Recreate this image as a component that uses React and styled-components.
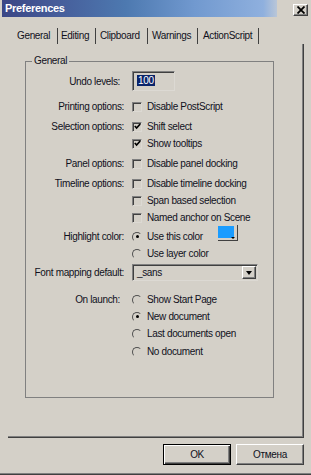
import React from 'react';
import styled, { createGlobalStyle } from 'styled-components';

const GlobalStyle = createGlobalStyle`
  html, body {
    margin: 0;
    padding: 0;
    background: #d4d0c8;
  }
  body {
    font-family: 'Liberation Sans', Arial, sans-serif;
    color: #10101c;
  }
`;

const Window = styled.div`
  width: 311px;
  height: 475px;
  box-sizing: border-box;
  background: #d4d0c8;
  display: flex;
  flex-direction: column;
  box-shadow: inset 0 -1px #404040, inset 0 -2px #808080;
  font-size: 10px;
  letter-spacing: -0.35px;
`;

const TitleRow = styled.div`
  display: flex;
  align-items: flex-start;
  height: 18px;
`;

const TitleBar = styled.div`
  width: 275px;
  height: 17px;
  margin-left: 2px;
  padding-left: 3px;
  box-sizing: border-box;
  background: linear-gradient(90deg, #3b4685 0%, #465d9a 20%, #4d79b0 45%, #7199cf 70%, #8fb0de 95%, #b9c6d8 100%);
  color: #fff;
  font-weight: bold;
  font-size: 11px;
  letter-spacing: -0.3px;
  line-height: 17px;
`;

const CloseButton = styled.div`
  margin-left: auto;
  margin-right: 3px;
  margin-top: 4px;
  width: 15px;
  height: 12px;
  box-sizing: border-box;
  border: 1px solid;
  border-color: #fff #404040 #404040 #fff;
  box-shadow: inset -1px -1px #808080;
  display: flex;
  align-items: center;
  justify-content: center;
`;

const TabStrip = styled.div`
  display: flex;
  margin-top: 10px;
  margin-left: 9px;
  height: 16px;
`;

const Tab = styled.div`
  width: ${p => p.$w}px;
  padding-left: ${p => p.$pl}px;
  box-sizing: border-box;
  border-right: 1px solid #404040;
  line-height: 16px;
  white-space: nowrap;
`;

const Panel = styled.div`
  margin-left: 8px;
  width: 296px;
  height: 394px;
  box-sizing: border-box;
  border-right: 1px solid #404040;
  border-bottom: 1px solid #404040;
  box-shadow: inset -1px -1px #808080;
  padding: 11px 0 0 17px;
`;

const Group = styled.fieldset`
  margin: 0;
  padding: 4px 0 0 0;
  width: 249px;
  height: 343px;
  box-sizing: border-box;
  border: 1px solid #808080;
  min-inline-size: 0;
`;

const Legend = styled.legend`
  margin-left: 6px;
  padding: 0 2px;
  line-height: 12px;
`;

const Row = styled.div`
  display: grid;
  grid-template-columns: 98px 1fr;
  column-gap: 8px;
  align-items: center;
  height: ${p => p.$h || 17}px;
  margin-top: ${p => p.$mt || 0}px;
`;

const Label = styled.div`
  text-align: right;
  padding-right: ${p => p.$pr || 0}px;
  white-space: nowrap;
`;

const Control = styled.div`
  grid-column: 2;
  display: flex;
  align-items: center;
  gap: 5px;
  white-space: nowrap;
`;

const Sunken = styled.div`
  box-sizing: border-box;
  border: 1px solid;
  border-color: #808080 #dcd9d3 #dcd9d3 #808080;
  box-shadow: inset 1px 1px #404040;
`;

const TextInput = styled(Sunken)`
  width: 43px;
  height: 20px;
  padding: 3px 0 0 4px;
`;

const Selected = styled.span`
  background: #0a246a;
  color: #fff;
  padding: 0 1px;
`;

const CheckBox = styled(Sunken)`
  width: 10px;
  height: 10px;
  display: flex;
  align-items: center;
  justify-content: center;
  flex-shrink: 0;
`;

const Radio = styled.div`
  width: 10px;
  height: 10px;
  box-sizing: border-box;
  border-radius: 50%;
  border: 1.5px solid;
  border-color: #505050 transparent transparent #505050;
  display: flex;
  align-items: center;
  justify-content: center;
  flex-shrink: 0;
`;

const Dot = styled.div`
  width: 3px;
  height: 3px;
  border-radius: 50%;
  background: #000;
`;

const Swatch = styled.div`
  position: relative;
  width: 20px;
  height: 16px;
  margin-left: 10px;
  margin-top: -7px;
  box-sizing: border-box;
  border-right: 1px solid #404040;
  border-bottom: 1px solid #404040;
  padding: 1px 3px 2px 0;
`;

const SwatchFill = styled.div`
  width: 100%;
  height: 100%;
  background: ${p => p.$color};
`;

const SwatchArrow = styled.div`
  position: absolute;
  right: 2px;
  bottom: 1px;
  width: 0;
  height: 0;
  border-left: 2px solid transparent;
  border-right: 2px solid transparent;
  border-top: 2px solid #000;
`;

const Select = styled(Sunken)`
  width: 126px;
  height: 17px;
  display: flex;
  align-items: center;
  justify-content: space-between;
  padding: 0 1px 0 4px;
`;

const SelectButton = styled.div`
  width: 14px;
  height: 13px;
  box-sizing: border-box;
  border: 1px solid;
  border-color: #fff #404040 #404040 #fff;
  box-shadow: inset -1px -1px #808080;
  display: flex;
  align-items: center;
  justify-content: center;
`;

const Triangle = styled.div`
  width: 0;
  height: 0;
  border-left: 3.5px solid transparent;
  border-right: 3.5px solid transparent;
  border-top: 4px solid #000;
`;

const ButtonRow = styled.div`
  display: flex;
  justify-content: flex-end;
  gap: 5px;
  padding-right: 7px;
  margin-top: 6px;
`;

const Button = styled.div`
  width: 68px;
  height: 21px;
  box-sizing: border-box;
  display: flex;
  align-items: center;
  justify-content: center;
  border: 1px solid;
  border-color: ${p => (p.$default ? '#000' : '#fff #404040 #404040 #fff')};
  box-shadow: ${p =>
    p.$default
      ? 'inset 1px 1px #fff, inset -1px -1px #404040, inset -2px -2px #808080'
      : 'inset -1px -1px #808080'};
`;

const Check = ({ checked }) => (
  <CheckBox>
    {checked && (
      <svg width="7" height="7" viewBox="0 0 7 7">
        <polyline points="0.8,3 2.6,5 6.2,1" fill="none" stroke="#000" strokeWidth="1.7" />
      </svg>
    )}
  </CheckBox>
);

const RadioButton = ({ checked }) => <Radio>{checked && <Dot />}</Radio>;

const CheckRow = ({ label, text, checked, mt }) => (
  <Row $mt={mt}>
    {label && <Label>{label}</Label>}
    <Control>
      <Check checked={checked} />
      {text}
    </Control>
  </Row>
);

const RadioRow = ({ label, text, checked, mt, pr, children }) => (
  <Row $mt={mt}>
    {label && <Label $pr={pr}>{label}</Label>}
    <Control>
      <RadioButton checked={checked} />
      {text}
      {children}
    </Control>
  </Row>
);

export default function App() {
  return (
    <>
      <GlobalStyle />
      <Window>
        <TitleRow>
          <TitleBar>Preferences</TitleBar>
          <CloseButton>
            <svg width="8" height="8" viewBox="0 0 8 8">
              <path d="M0.5 0.5 L7.5 7.5 M7.5 0.5 L0.5 7.5" stroke="#000" strokeWidth="1.8" />
            </svg>
          </CloseButton>
        </TitleRow>

        <TabStrip>
          <Tab $w={49} $pl={8}>General</Tab>
          <Tab $w={38} $pl={3}>Editing</Tab>
          <Tab $w={52} $pl={4}>Clipboard</Tab>
          <Tab $w={50} $pl={4}>Warnings</Tab>
          <Tab $w={61} $pl={5}>ActionScript</Tab>
        </TabStrip>

        <Panel>
          <Group>
            <Legend>General</Legend>

            <Row $h={20}>
              <Label $pr={4}>Undo levels:</Label>
              <Control>
                <TextInput>
                  <Selected>100</Selected>
                </TextInput>
              </Control>
            </Row>

            <CheckRow mt={7} label="Printing options:" text="Disable PostScript" />
            <CheckRow mt={3} label="Selection options:" text="Shift select" checked />
            <CheckRow text="Show tooltips" checked />
            <CheckRow mt={3} label="Panel options:" text="Disable panel docking" />
            <CheckRow mt={3} label="Timeline options:" text="Disable timeline docking" />
            <CheckRow text="Span based selection" />
            <CheckRow text="Named anchor on Scene" />

            <RadioRow mt={2} label="Highlight color:" text="Use this color" checked>
              <Swatch>
                <SwatchFill $color="#1a9cff" />
                <SwatchArrow />
              </Swatch>
            </RadioRow>
            <RadioRow text="Use layer color" />

            <Row $mt={2}>
              <Label>Font mapping default:</Label>
              <Control>
                <Select>
                  <span>_sans</span>
                  <SelectButton>
                    <Triangle />
                  </SelectButton>
                </Select>
              </Control>
            </Row>

            <RadioRow mt={10} pr={4} label="On launch:" text="Show Start Page" />
            <RadioRow text="New document" checked />
            <RadioRow text="Last documents open" />
            <RadioRow mt={1} text="No document" />
          </Group>
        </Panel>

        <ButtonRow>
          <Button $default>OK</Button>
          <Button>Отмена</Button>
        </ButtonRow>
      </Window>
    </>
  );
}
